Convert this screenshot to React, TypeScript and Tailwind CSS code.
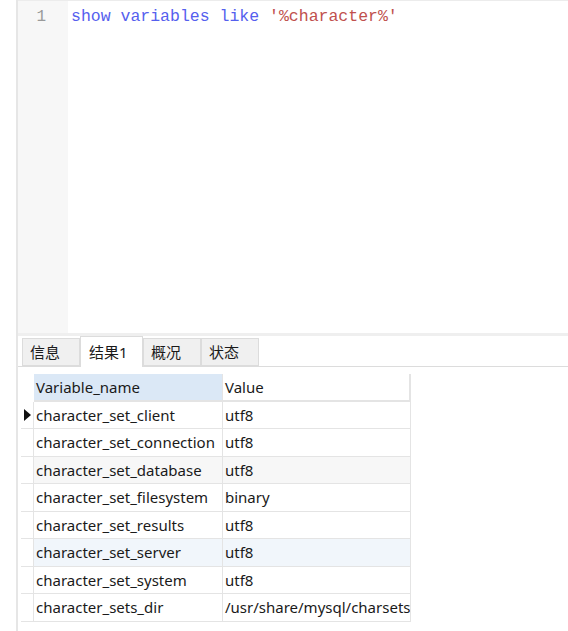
const rows = [
  { name: "character_set_client", value: "utf8", current: true },
  { name: "character_set_connection", value: "utf8" },
  { name: "character_set_database", value: "utf8", bg: "bg-[#f7f7f7]" },
  { name: "character_set_filesystem", value: "binary" },
  { name: "character_set_results", value: "utf8" },
  { name: "character_set_server", value: "utf8", bg: "bg-[#f1f6fb]" },
  { name: "character_set_system", value: "utf8" },
  { name: "character_sets_dir", value: "/usr/share/mysql/charsets/" },
];

const tabs = ["信息", "结果1", "概况", "状态"];

export default function App() {
  return (
    <div className="flex h-[631px] w-[568px] overflow-hidden bg-white font-['Noto_Sans','Noto_Sans_CJK_SC',sans-serif] text-[#1a1a1a]">
      <div className="w-[16px] shrink-0 bg-white" />
      <div className="flex min-w-0 flex-1 flex-col border-l-2 border-[#e6e6e6]">
        {/* editor */}
        <div className="flex h-[333px] border-t border-[#ececec]">
          <div className="w-[50px] shrink-0 bg-[#f7f7f7] pt-[5px] pr-[22px] text-right font-['Liberation_Mono',monospace] text-[16px] leading-[22px] text-[#9a9a9a]">
            1
          </div>
          <div className="pt-[5px] pl-[3px] font-['Liberation_Mono',monospace] text-[16.5px] leading-[22px] whitespace-pre">
            <span className="text-[#5560ee]">show variables like </span>
            <span className="text-[#c0504d]">'%character%'</span>
          </div>
        </div>
        <div className="h-[3px] bg-[#efefef]" />
        {/* tabs */}
        <div className="flex h-[31px] items-end border-b border-[#dcdcdc] pl-[4px]">
          {tabs.map((t, i) =>
            i === 1 ? (
              <div
                key={t}
                className="-mb-px flex h-[31px] w-[63px] items-center border border-b-0 border-[#dcdcdc] bg-white pl-[8px] text-[15px]"
              >
                {t}
              </div>
            ) : (
              <div
                key={t}
                className="flex h-[28px] w-[58px] items-center border border-[#dcdcdc] bg-[#f0f0f0] pl-[7px] text-[15px]"
              >
                {t}
              </div>
            )
          )}
        </div>
        {/* grid */}
        <div className="pt-[7px] pl-[3px]">
          <div className="flex h-[28px] text-[15px]">
            <div className="w-[13px] shrink-0" />
            <div className="flex w-[189px] items-center border-r border-b-2 border-[#e4e4e4] bg-[#dbe8f6] pl-[2px]">
              Variable_name
            </div>
            <div className="flex w-[188px] items-center border-r-2 border-b-2 border-[#e4e4e4] pl-[2px]">
              Value
            </div>
          </div>
          {rows.map((r, i) => (
            <div key={r.name} className={`flex text-[15px] ${i % 2 === 0 ? "h-[27px]" : "h-[28px]"}`}>
              <div className="flex w-[13px] shrink-0 items-center border-r border-b border-[#e4e4e4] bg-white">
                {r.current ? (
                  <svg width="10" height="14" viewBox="0 0 10 14" className="ml-[2px]">
                    <path d="M1 1 L8 7 L1 13 Z" fill="#111" />
                  </svg>
                ) : null}
              </div>
              <div
                className={`flex w-[189px] items-center overflow-hidden whitespace-nowrap border-r border-b border-[#e4e4e4] pl-[2px] ${r.bg ?? ""}`}
              >
                {r.name}
              </div>
              <div
                className={`flex w-[188px] items-center overflow-hidden whitespace-nowrap border-r border-b border-[#e4e4e4] pl-[2px] ${r.bg ?? ""}`}
              >
                {r.value}
              </div>
            </div>
          ))}
        </div>
      </div>
    </div>
  );
}
